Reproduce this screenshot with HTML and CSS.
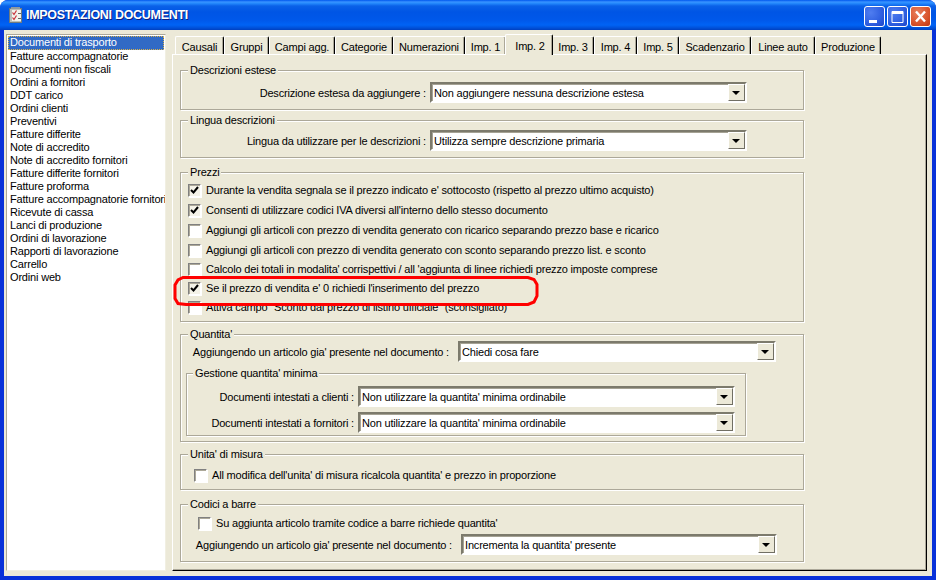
FILE: index.html
```html
<!DOCTYPE html>
<html lang="it">
<head>
<meta charset="utf-8">
<title>Impostazioni documenti</title>
<link rel="stylesheet" href="styles.css">
</head>
<body>
<div class="window">
  <header class="titlebar">
    <svg class="app-icon" width="16" height="17" viewBox="0 0 16 17">
      <rect x="1.500" y="1.500" width="12" height="14" fill="#b9bdb8" stroke="#6f7a80"/>
      <rect x="3" y="0" width="9" height="2" fill="#8f9aa0"/>
      <rect x="4" y="3" width="9" height="11" fill="#f2f2ec"/>
      <path d="M4.500 5.500l1.500 2 2.500-4M4.500 10.500l1.500 2 2.500-4" fill="none" stroke="#c8303a" stroke-width="1.200"/>
      <path d="M10 6.500h3M10 11.500h3" stroke="#666" stroke-width="1"/>
    </svg>
    <span class="title">IMPOSTAZIONI DOCUMENTI</span>
    <div class="winbtns">
      <button class="winbtn"><svg width="21" height="21" viewBox="0 0 21 21"><rect x="5" y="14" width="8" height="3" fill="#fff"/></svg></button>
      <button class="winbtn"><svg width="21" height="21" viewBox="0 0 21 21"><path d="M5 5.500h11v11h-11zM5 6.500h11M5 7.500h11" fill="none" stroke="#fff"/></svg></button>
      <button class="winbtn close"><svg width="21" height="21" viewBox="0 0 21 21"><path d="M6 5.500l9 10M15 5.500l-9 10" stroke="#fff" stroke-width="2.400"/></svg></button>
    </div>
  </header>
  <div class="client">
    <ul class="list">
      <li class="selected">Documenti di trasporto</li>
      <li>Fatture accompagnatorie</li>
      <li>Documenti non fiscali</li>
      <li>Ordini a fornitori</li>
      <li>DDT carico</li>
      <li>Ordini clienti</li>
      <li>Preventivi</li>
      <li>Fatture differite</li>
      <li>Note di accredito</li>
      <li>Note di accredito fornitori</li>
      <li>Fatture differite fornitori</li>
      <li>Fatture proforma</li>
      <li>Fatture accompagnatorie fornitori</li>
      <li>Ricevute di cassa</li>
      <li>Lanci di produzione</li>
      <li>Ordini di lavorazione</li>
      <li>Rapporti di lavorazione</li>
      <li>Carrello</li>
      <li>Ordini web</li>
    </ul>
    <div class="tabs-area">
      <div class="tabstrip">
        <div class="tab">Causali</div>
        <div class="tab">Gruppi</div>
        <div class="tab">Campi agg.</div>
        <div class="tab">Categorie</div>
        <div class="tab">Numerazioni</div>
        <div class="tab">Imp. 1</div>
        <div class="tab active">Imp. 2</div>
        <div class="tab">Imp. 3</div>
        <div class="tab">Imp. 4</div>
        <div class="tab">Imp. 5</div>
        <div class="tab">Scadenzario</div>
        <div class="tab">Linee auto</div>
        <div class="tab">Produzione</div>
      </div>
      <main class="panel">
        <section class="group g-desc">
          <span class="legend">Descrizioni estese</span>
          <div class="field f-desc">
            <span class="lbl">Descrizione estesa da aggiungere :</span>
            <div class="combo"><span class="combo-text">Non aggiungere nessuna descrizione estesa</span><span class="arrow"></span></div>
          </div>
        </section>
        <section class="group g-lang">
          <span class="legend">Lingua descrizioni</span>
          <div class="field f-desc f-lang">
            <span class="lbl">Lingua da utilizzare per le descrizioni :</span>
            <div class="combo"><span class="combo-text">Utilizza sempre descrizione primaria</span><span class="arrow"></span></div>
          </div>
        </section>
        <section class="group g-prezzi">
          <span class="legend">Prezzi</span>
          <div class="checks">
            <label class="check"><span class="box on"><svg width="11" height="11" viewBox="0 0 11 11"><path d="M2 5l2.500 2.500L9 2" fill="none" stroke="#000" stroke-width="2"/></svg></span>Durante la vendita segnala se il prezzo indicato e' sottocosto (rispetto al prezzo ultimo acquisto)</label>
            <label class="check"><span class="box on"><svg width="11" height="11" viewBox="0 0 11 11"><path d="M2 5l2.500 2.500L9 2" fill="none" stroke="#000" stroke-width="2"/></svg></span>Consenti di utilizzare codici IVA diversi all'interno dello stesso documento</label>
            <label class="check"><span class="box"></span>Aggiungi gli articoli con prezzo di vendita generato con ricarico separando prezzo base e ricarico</label>
            <label class="check"><span class="box"></span>Aggiungi gli articoli con prezzo di vendita generato con sconto separando prezzo list. e sconto</label>
            <label class="check"><span class="box"></span>Calcolo dei totali in modalita' corrispettivi / all 'aggiunta di linee richiedi prezzo imposte comprese</label>
            <label class="check"><span class="box on"><svg width="11" height="11" viewBox="0 0 11 11"><path d="M2 5l2.500 2.500L9 2" fill="none" stroke="#000" stroke-width="2"/></svg></span>Se il prezzo di vendita e' 0 richiedi l'inserimento del prezzo</label>
            <label class="check"><span class="box"></span>Attiva campo "Sconto dal prezzo di listino ufficiale" (sconsigliato)</label>
          </div>
          <svg class="highlight" width="368" height="32" viewBox="0 0 368 32">
            <path d="M11 2.500H356l6 2 3 5V21l-3 6-6 2.500H14l-8-1-3-5V10l3-5z" fill="none" stroke="#f00" stroke-width="3"/>
          </svg>
        </section>
        <section class="group g-qta">
          <span class="legend">Quantita'</span>
          <div class="field f-qta">
            <span class="lbl">Aggiungendo un articolo gia' presente nel documento :</span>
            <div class="combo"><span class="combo-text">Chiedi cosa fare</span><span class="arrow"></span></div>
          </div>
          <section class="group g-min">
            <span class="legend">Gestione quantita' minima</span>
            <div class="field f-min">
              <span class="lbl">Documenti intestati a clienti :</span>
              <div class="combo"><span class="combo-text">Non utilizzare la quantita' minima ordinabile</span><span class="arrow"></span></div>
            </div>
            <div class="field f-min f-min2">
              <span class="lbl">Documenti intestati a fornitori :</span>
              <div class="combo"><span class="combo-text">Non utilizzare la quantita' minima ordinabile</span><span class="arrow"></span></div>
            </div>
          </section>
        </section>
        <section class="group g-unita">
          <span class="legend">Unita' di misura</span>
          <label class="check c-unita"><span class="box"></span>All modifica dell'unita' di misura ricalcola quantita' e prezzo in proporzione</label>
        </section>
        <section class="group g-barre">
          <span class="legend">Codici a barre</span>
          <label class="check c-barre"><span class="box"></span>Su aggiunta articolo tramite codice a barre richiede quantita'</label>
          <div class="field f-barre">
            <span class="lbl">Aggiungendo un articolo gia' presente nel documento :</span>
            <div class="combo"><span class="combo-text">Incrementa la quantita' presente</span><span class="arrow"></span></div>
          </div>
        </section>
      </main>
    </div>
  </div>
</div>
</body>
</html>
```

FILE: styles.css
```css
* { box-sizing: border-box; }
html, body { margin: 0; padding: 0; background: #fff; }
body {
  width: 936px;
  height: 580px;
  overflow: hidden;
  font: 11px/13px "Liberation Sans", Arial, sans-serif;
  letter-spacing: -0.18px;
  color: #000;
}
.window {
  width: 936px;
  height: 580px;
  display: flex;
  flex-direction: column;
  background: #0831d9;
  border-radius: 8px 8px 0 0;
  overflow: hidden;
}
.titlebar {
  height: 30px;
  flex: none;
  display: flex;
  align-items: center;
  padding: 0 5px 0 8px;
  background: linear-gradient(180deg, #0058ee 0, #3a93ff 2px, #288eff 3px, #0a61e8 6px, #0055e5 12px, #0058ea 20px, #0063f5 25px, #0050d8 28px, #0040c0 30px);
}
.app-icon { flex: none; margin-right: 2px; }
.title {
  font-size: 12.5px;
  font-weight: 700;
  letter-spacing: -0.3px;
  color: #fff;
  text-shadow: 1px 1px 0 #0f1f80;
  flex: 1;
}
.winbtns { display: flex; gap: 2px; margin-top: 3px; }
.winbtn {
  width: 21px;
  height: 21px;
  padding: 0;
  border: 1px solid #fff;
  border-radius: 3px;
  background: radial-gradient(circle at 30% 30%, #4f7df0 0, #2f5fe0 60%, #1c44c8 100%);
  display: block;
  overflow: hidden;
}
.winbtn svg { display: block; margin: -1px; }
.winbtn.close { background: radial-gradient(circle at 35% 30%, #e8805f 0, #d9542c 60%, #c03510 100%); }
.client {
  flex: 1;
  display: flex;
  margin: 0 4px 4px;
  padding: 4px 5px 5px 2px;
  background: #ece9d8;
  gap: 6px;
}
.list {
  width: 160px;
  flex: none;
  margin: 0;
  padding: 1px;
  list-style: none;
  background: #fff;
  border: 1px solid #aca899;
  border-right-color: #f1efe2;
  border-bottom-color: #f1efe2;
  overflow: hidden;
  white-space: nowrap;
}
.list li { height: 13px; padding-left: 2px; line-height: 13px; }
.list li.selected {
  height: 14px;
  background: #316ac5;
  color: #fff;
  outline: 1px dotted #d9b24c;
  outline-offset: -1px;
}
.tabs-area { flex: 1; min-width: 0; display: flex; flex-direction: column; }
.tabstrip {
  height: 20px;
  flex: none;
  display: grid;
  grid-template-columns: 49px 45px 66px 58px 72px 41px 46px 42px 43px 42px 72px 64px 66px;
  padding-left: 3px;
  align-items: end;
}
.tab {
  height: 18px;
  text-align: center;
  line-height: 21px;
  border-top: 1px solid #fff;
  border-left: 1px solid #fff;
  border-right: 1px solid #000;
  border-radius: 2px 2px 0 0;
  box-shadow: inset -1px 0 0 #aca899;
  white-space: nowrap;
}
.tab.active {
  height: 21px;
  margin: 0 -1px -1px;
  padding-left: 2px;
  line-height: 22px;
  background: #ece9d8;
  position: relative;
  z-index: 1;
}
.panel {
  flex: 1;
  border-top: 1px solid #fff;
  border-left: 1px solid #fff;
  border-right: 1px solid #000;
  border-bottom: 1px solid #000;
  box-shadow: inset -1px -1px 0 #aca899;
  padding: 15px 0 0 7px;
}
.group {
  position: relative;
  width: 624px;
  border: 1px solid #aca899;
  box-shadow: 1px 1px 0 #fff, inset 1px 1px 0 #fff;
}
.legend {
  position: absolute;
  left: 7px;
  top: -7px;
  padding: 0 2px;
  background: #ece9d8;
  white-space: nowrap;
}
.g-min > .legend { left: 6px; }
.g-desc { height: 40px; }
.g-lang { height: 38px; margin-top: 10px; }
.g-prezzi { height: 150px; margin-top: 14px; }
.g-qta { height: 108px; margin-top: 12px; }
.g-min { width: 560px; height: 63px; margin: 11px 0 0 5px; }
.g-unita { height: 36px; margin-top: 12px; }
.g-barre { height: 58px; margin-top: 14px; }
.field { display: flex; align-items: center; height: 21px; }
.lbl { text-align: right; white-space: nowrap; flex: none; margin-right: 4px; padding-top: 1px; }
.combo {
  flex: none;
  height: 21px;
  display: flex;
  align-items: center;
  background: #fff;
  border: 2px solid;
  border-color: #7c7a6c #fff #fff #7c7a6c;
  box-shadow: inset 1px 1px 0 #a5a294;
  padding-left: 2px;
  position: relative;
}
.combo-text { flex: 1; white-space: nowrap; overflow: hidden; padding-top: 1px; }
.arrow {
  flex: none;
  width: 17px;
  height: 17px;
  background: #ece9d8;
  border: 1px solid;
  border-color: #fff #716f64 #716f64 #fff;
  position: relative;
}
.arrow::after {
  content: "";
  position: absolute;
  left: 3px;
  top: 6px;
  border: 4px solid transparent;
  border-top-color: #000;
  border-bottom: 0;
}
.f-desc { margin-top: 11px; }
.f-lang { margin-top: 9px; }
.f-desc .lbl { width: 245px; }
.f-desc .combo { width: 317px; }
.f-qta { margin-top: 6px; }
.f-qta .lbl { width: 268px; margin-right: 9px; }
.f-qta .combo { width: 318px; }
.f-min { margin-top: 12px; }
.f-min2 { margin-top: 5px; }
.f-min .lbl { width: 167px; }
.f-min .combo { width: 377px; }
.f-barre { margin-top: 1px; }
.f-barre .lbl { width: 271px; margin-right: 9px; }
.f-barre .combo { width: 316px; }
.checks {
  display: grid;
  grid-template-rows: 20px 20px 20px 19px 19px 19px 19px;
  margin: 8px 0 0 7px;
}
.check { display: flex; align-items: center; white-space: nowrap; height: 19px; }
.box {
  flex: none;
  width: 13px;
  height: 13px;
  margin-right: 5px;
  background: #fff;
  border: 1px solid #808080;
  border-right-color: #fff;
  border-bottom-color: #fff;
  box-shadow: inset 1px 1px 0 #aca899, 1px 1px 0 #fff;
}
.box svg { display: block; }
.box.on { background: #f4f2e8; }
.highlight { position: absolute; left: -9px; top: 102px; }
.c-unita { margin: 11px 0 0 13px; }
.c-barre { margin: 9px 0 0 17px; }
```
